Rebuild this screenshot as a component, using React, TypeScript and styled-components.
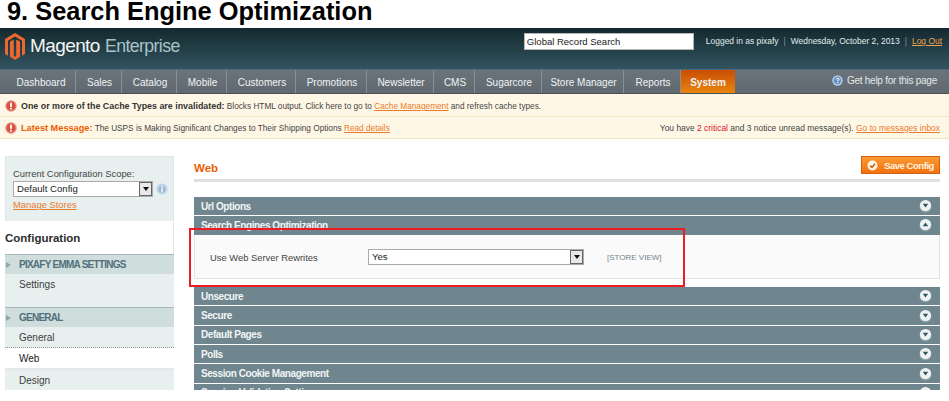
import styled, { createGlobalStyle } from 'styled-components'

const GlobalStyle = createGlobalStyle`
  html, body {
    margin: 0;
    padding: 0;
    background: #fff;
  }
  body {
    font-family: "Liberation Sans", Arial, sans-serif;
    overflow: hidden;
  }
`

const Page = styled.div`
  position: relative;
  width: 949px;
  height: 390px;
  overflow: hidden;
  background: #fff;
`

const Title = styled.h1`
  margin: 0;
  height: 28px;
  padding-left: 7px;
  font-size: 25.4px;
  line-height: 22px;
  font-weight: 700;
  color: #000;
  white-space: nowrap;
`

const Header = styled.header`
  height: 42px;
  display: flex;
  justify-content: space-between;
  padding: 5px 7px 0 5px;
  box-sizing: border-box;
  background: linear-gradient(#14292f, #325460);
  border-bottom: 1px solid #4d6c78;
`

const Brand = styled.div`
  display: flex;
  align-items: flex-start;
  gap: 5px;
`

const BrandName = styled.span`
  font-size: 19px;
  line-height: 26px;
  letter-spacing: -0.6px;
  color: #f2f6f6;
`

const BrandEdition = styled.span`
  font-size: 17.7px;
  line-height: 26px;
  margin-left: 1px;
  color: #a9c3c9;
  font-weight: 400;
`

const HeaderRight = styled.div`
  display: flex;
  align-items: flex-start;
  gap: 12px;
`

const SearchInput = styled.div`
  width: 170px;
  height: 17px;
  padding-left: 2px;
  box-sizing: border-box;
  background: #fff;
  border: 1px solid #b6b6b6;
  font-size: 9.5px;
  line-height: 15px;
  color: #222;
`

const UserInfo = styled.div`
  display: flex;
  gap: 5px;
  font-size: 8.45px;
  line-height: 17px;
  color: #e3ecee;
`

const Divider = styled.span`
  color: #7f98a1;
`

const LogOut = styled.a`
  color: #eda34c;
  text-decoration: underline;
`

const Nav = styled.nav`
  height: 24px;
  display: flex;
  justify-content: space-between;
  background: linear-gradient(#6b747b, #5f696f);
  border-bottom: 1px solid #4a5358;
  box-sizing: border-box;
`

const Tabs = styled.div`
  display: flex;
  padding-left: 5px;
`

const Tab = styled.div<{ $width: number; $active?: boolean }>`
  width: ${(p) => p.$width}px;
  padding-left: ${(p) => (p.$active ? 0 : 2)}px;
  text-align: center;
  box-sizing: border-box;
  font-size: 10px;
  line-height: 25px;
  font-weight: ${(p) => (p.$active ? 700 : 400)};
  color: #f0f3f4;
  border-right: ${(p) => (p.$active ? 'none' : '1px solid #879096')};
  background: ${(p) => (p.$active ? 'linear-gradient(#c94d04, #e9850f)' : 'none')};
`

const Help = styled.div`
  display: flex;
  align-items: center;
  gap: 4px;
  padding: 0 12px 2px 0;
  font-size: 10px;
  letter-spacing: -0.25px;
  color: #e3e8ea;
`

const Notice = styled.div<{ $first?: boolean }>`
  height: ${(p) => (p.$first ? 23 : 22)}px;
  display: flex;
  justify-content: space-between;
  align-items: center;
  padding: ${(p) => (p.$first ? '2px' : '0')} 9px 0 5px;
  box-sizing: border-box;
  background: #fff7e6;
  border-bottom: 1px solid #f3e6c6;
  font-size: 8.25px;
  color: #444;
`

const NoticeText = styled.div`
  display: flex;
  align-items: center;
  gap: 4px;
  white-space: pre;
`

const NoticeSummary = styled.span`
  font-size: 8.45px;
`

const Strong = styled.b`
  font-size: 8.9px;
  color: #333;
`

const Latest = styled.b`
  font-size: 9.2px;
  color: #eb5e00;
`

const Critical = styled.b`
  font-weight: 400;
  color: #d8122a;
`

const OrangeLink = styled.a`
  color: #ea7b2c;
  text-decoration: underline;
`

const Main = styled.div`
  display: flex;
  align-items: flex-start;
  padding: 17px 9px 0 5px;
`

const Sidebar = styled.aside`
  width: 169px;
  flex-shrink: 0;
`

const ScopeBox = styled.div`
  height: 65px;
  padding: 11px 4px 0 7px;
  box-sizing: border-box;
  background: #e7efef;
  border: 1px solid #dfe8e8;
  border-bottom: none;
  font-size: 9.4px;
  color: #444;
`

const ScopeLabel = styled.div`
  line-height: 12px;
  margin-bottom: 1px;
`

const ScopeRow = styled.div`
  display: flex;
  align-items: center;
  gap: 3px;
  margin-bottom: 2px;
`

const Select = styled.div<{ $width: number }>`
  width: ${(p) => p.$width}px;
  height: 16px;
  flex-shrink: 0;
  display: flex;
  justify-content: space-between;
  box-sizing: border-box;
  padding-left: 3px;
  background: #fff;
  border: 1px solid #aaa;
  font-size: 9.6px;
  line-height: 14px;
  color: #222;
`

const SelectArrow = styled.span`
  width: 13px;
  height: 14px;
  display: flex;
  align-items: center;
  justify-content: center;
  box-sizing: border-box;
  background: #e8e8e8;
  border: 1px solid #666;
  &::after {
    content: '';
    border-left: 3px solid transparent;
    border-right: 3px solid transparent;
    border-top: 4px solid #111;
  }
`

const ConfigTitle = styled.div`
  height: 33px;
  font-size: 11.5px;
  line-height: 35px;
  font-weight: 700;
  color: #2d2d2d;
  border-right: 1px solid #e3e9e9;
`

const SectionHead = styled.div`
  height: 20px;
  display: flex;
  align-items: center;
  gap: 8px;
  padding-left: 1px;
  background: #cfdddd;
  border-top: 1px solid #a5b8bb;
  box-sizing: border-box;
  font-size: 10px;
  letter-spacing: -0.75px;
  font-weight: 700;
  color: #51707a;
  &::before {
    content: '';
    border-left: 5px solid #8fa5aa;
    border-top: 3px solid transparent;
    border-bottom: 3px solid transparent;
  }
`

const SideItem = styled.div<{ $height: number; $current?: boolean }>`
  height: ${(p) => p.$height}px;
  padding: 4px 0 0 14px;
  box-sizing: border-box;
  font-size: 10px;
  line-height: 13px;
  color: ${(p) => (p.$current ? '#222' : '#3d3d3d')};
  background: ${(p) => (p.$current ? '#fff' : '#e7efef')};
  border-bottom: ${(p) => (p.$current ? '2px solid #e3e9e9' : 'none')};
`

const DottedItem = styled(SideItem)`
  border-bottom: 1px dotted #8a9a9c;
`

const Content = styled.main`
  flex: 1;
  margin-left: 20px;
`

const ContentHead = styled.div`
  height: 26px;
  display: flex;
  justify-content: space-between;
  box-sizing: border-box;
  border-bottom: 3px solid #e0e0e0;
`

const ContentTitle = styled.h2`
  margin: 2px 0 0;
  font-size: 11.5px;
  line-height: 20px;
  font-weight: 700;
  color: #eb5e00;
`

const SaveButton = styled.button`
  width: 79px;
  height: 18px;
  display: flex;
  align-items: center;
  gap: 6px;
  margin: 0;
  padding: 0 0 0 5px;
  box-sizing: border-box;
  background: linear-gradient(#fb9a33, #f2720f);
  border: 1px solid #d2600e;
  font-family: inherit;
  font-size: 9.5px;
  letter-spacing: -0.45px;
  font-weight: 700;
  color: #fff3e0;
  white-space: nowrap;
`

const Fieldsets = styled.div`
  margin-top: 15px;
`

const Bar = styled.div`
  height: 18.33px;
  margin-bottom: 1px;
  display: flex;
  align-items: center;
  justify-content: space-between;
  padding: 0 8px 0 7px;
  box-sizing: border-box;
  background: #6f868e;
  font-size: 10px;
  letter-spacing: -0.43px;
  font-weight: 700;
  color: #f2f5f6;
`

const Panel = styled.div`
  height: 43px;
  margin-bottom: 8.5px;
  display: flex;
  align-items: center;
  padding: 1px 0 0 15px;
  box-sizing: border-box;
  background: #fafafa;
  border: 1px solid #e3e3e3;
  border-top: none;
  font-size: 9.4px;
  color: #444;
`

const FieldLabel = styled.span`
  width: 158px;
`

const ScopeTag = styled.span`
  margin-left: 23px;
  font-size: 8px;
  color: #73868d;
`

// highlight drawn over the screenshot by whoever wrote the tutorial
const Highlight = styled.div`
  position: absolute;
  left: 189px;
  top: 228px;
  width: 496px;
  height: 59px;
  box-sizing: border-box;
  border: 2px solid #ed1c24;
  pointer-events: none;
`

const Toggle = ({ up }: { up?: boolean }) => (
  <svg width="13" height="14" viewBox="0 0 13 14">
    <circle cx="6.5" cy="7.5" r="6" fill="#8fa3aa" />
    <circle cx="6.5" cy="6.5" r="5.6" fill="#eef2f3" />
    <path d={up ? 'M3.8 8.2h5.4L6.5 4.4z' : 'M3.8 4.8h5.4L6.5 8.6z'} fill="#2f5360" />
  </svg>
)

const Logo = () => (
  <svg width="20" height="27" viewBox="0 0 20 27">
    <path d="M10 0 20 6v15l-3 1.8V7.7L10 3.6 3 7.7v15.1L0 21V6z" fill="#ee672f" />
    <path d="M5 8.6 8.8 6.4V23L10 23.8 11.2 23V6.4L15 8.6v15.2L10 27 5 23.8z" fill="#ee672f" />
  </svg>
)

const AlertIcon = () => (
  <svg width="12" height="12" viewBox="0 0 12 12">
    <circle cx="6" cy="6" r="5.7" fill="#e98a7c" />
    <circle cx="6" cy="6" r="4.4" fill="#d9503f" />
    <rect x="5.1" y="2.6" width="1.8" height="4.4" fill="#fff" />
    <rect x="5.1" y="7.8" width="1.8" height="1.7" fill="#fff" />
  </svg>
)

const HelpIcon = () => (
  <svg width="11" height="11" viewBox="0 0 11 11">
    <circle cx="5.5" cy="5.5" r="5.2" fill="#a9c8ea" />
    <circle cx="5.5" cy="5.5" r="3.4" fill="#5f86b5" />
    <text x="5.5" y="8" textAnchor="middle" fontSize="7" fontWeight="700" fill="#fff">
      ?
    </text>
  </svg>
)

const ScopeHint = () => (
  <svg width="12" height="12" viewBox="0 0 12 12">
    <circle cx="6" cy="6" r="5.6" fill="#c3d5e8" />
    <circle cx="6" cy="6" r="3.6" fill="#9db9d8" />
    <rect x="5.2" y="3" width="1.6" height="1.6" fill="#fff" />
    <rect x="5.2" y="5.4" width="1.6" height="3.4" fill="#fff" />
  </svg>
)

const CheckIcon = () => (
  <svg width="11" height="11" viewBox="0 0 11 11">
    <circle cx="5.5" cy="5.5" r="5" fill="#fff6ea" />
    <path d="M3.2 5.6 5 7.4 7.9 3.8" fill="none" stroke="#c85e08" strokeWidth="1.6" />
  </svg>
)

const tabs = [
  { label: 'Dashboard', width: 71 },
  { label: 'Sales', width: 46 },
  { label: 'Catalog', width: 55 },
  { label: 'Mobile', width: 50 },
  { label: 'Customers', width: 69 },
  { label: 'Promotions', width: 71 },
  { label: 'Newsletter', width: 67 },
  { label: 'CMS', width: 41 },
  { label: 'Sugarcore', width: 67 },
  { label: 'Store Manager', width: 82 },
  { label: 'Reports', width: 57 },
  { label: 'System', width: 54, active: true },
]

const lowerBars = ['Unsecure', 'Secure', 'Default Pages', 'Polls', 'Session Cookie Management', 'Session Validation Settings']

const App = () => {
  return (
    <Page>
      <GlobalStyle />
      <Title>9. Search Engine Optimization</Title>
      <Header>
        <Brand>
          <Logo />
          <BrandName>
            Magento<BrandEdition> Enterprise</BrandEdition>
          </BrandName>
        </Brand>
        <HeaderRight>
          <SearchInput>Global Record Search</SearchInput>
          <UserInfo>
            <span>Logged in as pixafy</span>
            <Divider>|</Divider>
            <span>Wednesday, October 2, 2013</span>
            <Divider>|</Divider>
            <LogOut>Log Out</LogOut>
          </UserInfo>
        </HeaderRight>
      </Header>
      <Nav>
        <Tabs>
          {tabs.map((tab) => (
            <Tab key={tab.label} $width={tab.width} $active={tab.active}>
              {tab.label}
            </Tab>
          ))}
        </Tabs>
        <Help>
          <HelpIcon />
          Get help for this page
        </Help>
      </Nav>
      <Notice $first>
        <NoticeText>
          <AlertIcon />
          <span>
            <Strong>One or more of the Cache Types are invalidated:</Strong> Blocks HTML output. Click here to go to{' '}
            <OrangeLink>Cache Management</OrangeLink> and refresh cache types.
          </span>
        </NoticeText>
      </Notice>
      <Notice>
        <NoticeText>
          <AlertIcon />
          <span>
            <Latest>Latest Message:</Latest> The USPS is Making Significant Changes to Their Shipping Options{' '}
            <OrangeLink>Read details</OrangeLink>
          </span>
        </NoticeText>
        <NoticeSummary>
          You have <Critical>2 critical</Critical> and 3 notice unread message(s).{' '}
          <OrangeLink>Go to messages inbox</OrangeLink>
        </NoticeSummary>
      </Notice>
      <Main>
        <Sidebar>
          <ScopeBox>
            <ScopeLabel>Current Configuration Scope:</ScopeLabel>
            <ScopeRow>
              <Select $width={140}>
                Default Config
                <SelectArrow />
              </Select>
              <ScopeHint />
            </ScopeRow>
            <OrangeLink>Manage Stores</OrangeLink>
          </ScopeBox>
          <ConfigTitle>Configuration</ConfigTitle>
          <SectionHead>PIXAFY EMMA SETTINGS</SectionHead>
          <SideItem $height={33}>Settings</SideItem>
          <SectionHead>GENERAL</SectionHead>
          <DottedItem $height={21}>General</DottedItem>
          <SideItem $height={22} $current>
            Web
          </SideItem>
          <SideItem $height={22}>Design</SideItem>
        </Sidebar>
        <Content>
          <ContentHead>
            <ContentTitle>Web</ContentTitle>
            <SaveButton>
              <CheckIcon />
              Save Config
            </SaveButton>
          </ContentHead>
          <Fieldsets>
            <Bar>
              Url Options
              <Toggle />
            </Bar>
            <Bar>
              Search Engines Optimization
              <Toggle up />
            </Bar>
            <Panel>
              <FieldLabel>Use Web Server Rewrites</FieldLabel>
              <Select $width={216}>
                Yes
                <SelectArrow />
              </Select>
              <ScopeTag>[STORE VIEW]</ScopeTag>
            </Panel>
            {lowerBars.map((name) => (
              <Bar key={name}>
                {name}
                <Toggle />
              </Bar>
            ))}
          </Fieldsets>
        </Content>
      </Main>
      <Highlight />
    </Page>
  )
}

export default App
